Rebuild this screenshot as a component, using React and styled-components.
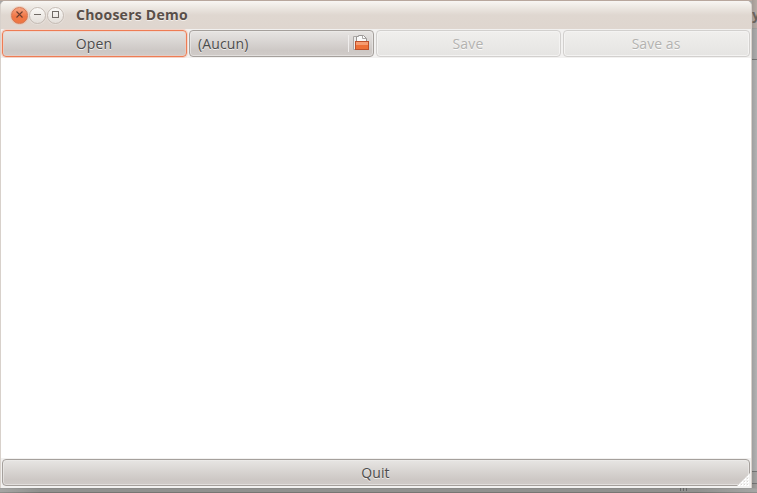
import React from "react";
import styled, { createGlobalStyle, css } from "styled-components";

const GlobalStyle = createGlobalStyle`
  * { box-sizing: border-box; }
  html, body { margin: 0; padding: 0; overflow: hidden; }
  body { font-family: "Open Sans", "Noto Sans", sans-serif; font-size: 14px; color: #4c4c4c; }
  button { font: inherit; color: inherit; margin: 0; }
`;

const Desktop = styled.div`
  position: relative;
  width: 757px;
  height: 493px;
  overflow: hidden;
  padding-top: 1px;
  background: linear-gradient(#b8a79d 0 1px, #a7a6a5 1px 100%);
`;

const BackWindow = styled.div`
  position: absolute;
  left: 752px;
  top: 0;
  width: 5px;
  height: 493px;
  overflow: hidden;
  background:
    linear-gradient(90deg, #0000001c, transparent),
    linear-gradient(#b7aca6 0 28px, #a3a3a2 28px 29px, #acacac 29px 59px, #777 59px 60px, #b3b3b3 60px 471px, #777 471px 472px, #a5a4a3 472px 483px, #777 483px 484px, #a19f9d 484px);
`;

const BackTitle = styled.span`
  position: absolute;
  left: 0;
  top: 5px;
  font-weight: 700;
  line-height: 20px;
  color: #69625d;
`;

const BottomShadow = styled.div`
  position: absolute;
  left: 0;
  top: 488px;
  width: 757px;
  height: 5px;
  background:
    linear-gradient(90deg, #ffffff30 0, transparent 40px calc(100% - 60px), #ffffff30 100%),
    linear-gradient(#8a8a88 0 1px, #91918f 1px 4px, #777673 4px 5px);
`;

const PaneGrip = styled.svg`
  position: absolute;
  left: 680px;
  top: 488px;
`;

const Window = styled.main`
  position: relative;
  display: flex;
  flex-direction: column;
  width: 752px;
  height: 487px;
  overflow: hidden;
  background: #f2f1f0;
  border: solid #d8d1cb;
  border-width: 0 1px;
  border-radius: 5px 5px 0 0;
`;

const TitleBar = styled.header`
  display: flex;
  align-items: center;
  height: 28px;
  flex: none;
  padding-left: 10px;
  background: linear-gradient(#f8f6f3 0, #efebe6 5px, #dfd7d0 14px, #dfd6cf 100%);
`;

const WindowControls = styled.div`
  display: flex;
  gap: 1px;
  margin-right: 12px;
`;

const ControlButton = styled.button`
  width: 17px;
  height: 17px;
  padding: 0;
  border: 1px solid ${(p) => (p.$close ? "#d7754f" : "#c5bcb5")};
  border-radius: 50%;
  background: ${(p) => (p.$close
    ? "linear-gradient(#f7a583, #f07746 55%, #ee7642)"
    : "linear-gradient(#fbfaf8, #eeeae6 55%, #e4dfda)")};
  box-shadow: 0 0 0 1px ${(p) => (p.$close ? "#efb79e88" : "#ffffff33")};
  color: ${(p) => (p.$close ? "#6c3d2d" : "#716b66")};
  svg { display: block; position: relative; top: -1px; }
`;

const Title = styled.h1`
  margin: 0;
  font-size: 14px;
  font-weight: 700;
  line-height: 20px;
  letter-spacing: 0.24px;
  color: #594f49;
  text-shadow: 0 1px #f3eeea;
`;

const Toolbar = styled.nav`
  display: grid;
  grid-template-columns: 185px 185px 185px 187px;
  gap: 2px;
  height: 29px;
  flex: none;
  padding: 1px 1px 0;
  background: #f2f1f0;
`;

const variants = {
  normal: css`
    border-color: #a5a09c;
    background: linear-gradient(#e7e5e3, #cdc8c5 78%, #d0cbc8);
    box-shadow: inset 0 0 0 1px #eeeceb99;
  `,
  focused: css`
    border-color: #ee7c54;
    background: linear-gradient(#e6e4e2, #cdc8c5 78%, #d0cbc8);
    box-shadow: inset 0 0 0 1px #eecec399, 0 0 0 1px #f3aa8f66;
  `,
  disabled: css`
    border-color: #d2d0ce;
    background: linear-gradient(#f0efed, #e5e4e2);
    box-shadow: inset 0 0 0 1px #f4f3f2;
    color: #b3b2b0;
    text-shadow: 0 1px #fafafa;
  `,
};

const Button = styled.button`
  position: relative;
  display: flex;
  align-items: center;
  justify-content: center;
  height: 27px;
  padding: 0 1px 0 0;
  border: 1px solid;
  border-radius: 4px;
  line-height: 20px;
  text-shadow: 0 1px #efeeec;
  ${(p) => variants[p.$variant || "normal"]}
`;

const ChooserButton = styled(Button)`
  justify-content: space-between;
  padding: 0 4px 0 8px;
`;

const ChooserIcon = styled.span`
  display: flex;
  align-items: flex-start;
  height: 17px;
  padding-left: 4px;
  border-left: 1px solid #f0eeed;
`;

const Caption = styled.span`
  letter-spacing: ${(p) => p.$spacing || 0}px;
`;

const TextArea = styled.section`
  flex: 1;
  background: #fff;
`;

const Footer = styled.footer`
  display: flex;
  height: 30px;
  flex: none;
  padding: 1px;
`;

const QuitButton = styled(Button)`
  flex: 1;
`;

const ResizeGrip = styled.svg`
  position: absolute;
  right: 0;
  bottom: 0;
`;

const gripDots = [];
for (let row = 0; row < 4; row += 1) {
  for (let col = 3 - row; col < 4; col += 1) gripDots.push([3 + col * 3, 3 + row * 3]);
}

function FolderIcon() {
  return (
    <svg width="16" height="16" viewBox="0 0 16 16">
      <path d="M.5 14.5V1.5H4.5V3.5H13.5V14.5Z" fill="#ecebea" stroke="#aaa7a4" />
      <path d="M3.5 8V1.5H5.5V.5H10.5L13.5 3.5V8Z" fill="#fafafa" stroke="#999694" />
      <path d="M9.5.5V3.5H13.5" fill="none" stroke="#aaa7a4" />
      <rect x="2.5" y="6.5" width="13" height="8" fill="#ed7037" stroke="#bd512b" />
      <rect x="3" y="7" width="12" height="3" fill="#f69c71" />
    </svg>
  );
}

export default function App() {
  return (
    <>
      <GlobalStyle />
      <Desktop>
        <BackWindow><BackTitle>y</BackTitle></BackWindow>
        <BottomShadow />
        <PaneGrip width="8" height="4"><path d="M.5 0v3M3.5 0v3M6.5 0v3" stroke="#656565" /></PaneGrip>
        <Window>
          <TitleBar>
            <WindowControls>
              <ControlButton $close aria-label="Close">
                <svg width="15" height="15"><path d="M4.5 4.5l6 6M10.5 4.5l-6 6" stroke="currentColor" strokeWidth="1.1" /></svg>
              </ControlButton>
              <ControlButton aria-label="Minimize">
                <svg width="15" height="15"><path d="M4 7.5h7" stroke="currentColor" /></svg>
              </ControlButton>
              <ControlButton aria-label="Maximize">
                <svg width="15" height="15"><rect x="4.5" y="4.5" width="6" height="6" fill="none" stroke="currentColor" /></svg>
              </ControlButton>
            </WindowControls>
            <Title>Choosers Demo</Title>
          </TitleBar>
          <Toolbar>
            <Button $variant="focused"><Caption $spacing={0.15}>Open</Caption></Button>
            <ChooserButton>
              <Caption $spacing={0.12}>(Aucun)</Caption>
              <ChooserIcon><FolderIcon /></ChooserIcon>
            </ChooserButton>
            <Button $variant="disabled" disabled><Caption $spacing={0.15}>Save</Caption></Button>
            <Button $variant="disabled" disabled><Caption $spacing={0.05}>Save as</Caption></Button>
          </Toolbar>
          <TextArea />
          <Footer><QuitButton><Caption $spacing={0.1}>Quit</Caption></QuitButton></Footer>
          <ResizeGrip width="16" height="16">
            <path d="M16 0V16H0Z" fill="#f2f1f0" />
            {gripDots.map(([x, y]) => (
              <g key={`${x}-${y}`}>
                <rect x={x} y={y} width="2" height="2" fill="#fff" />
                <rect x={x} y={y} width="1" height="1" fill="#dad7d4" />
              </g>
            ))}
          </ResizeGrip>
        </Window>
      </Desktop>
    </>
  );
}
